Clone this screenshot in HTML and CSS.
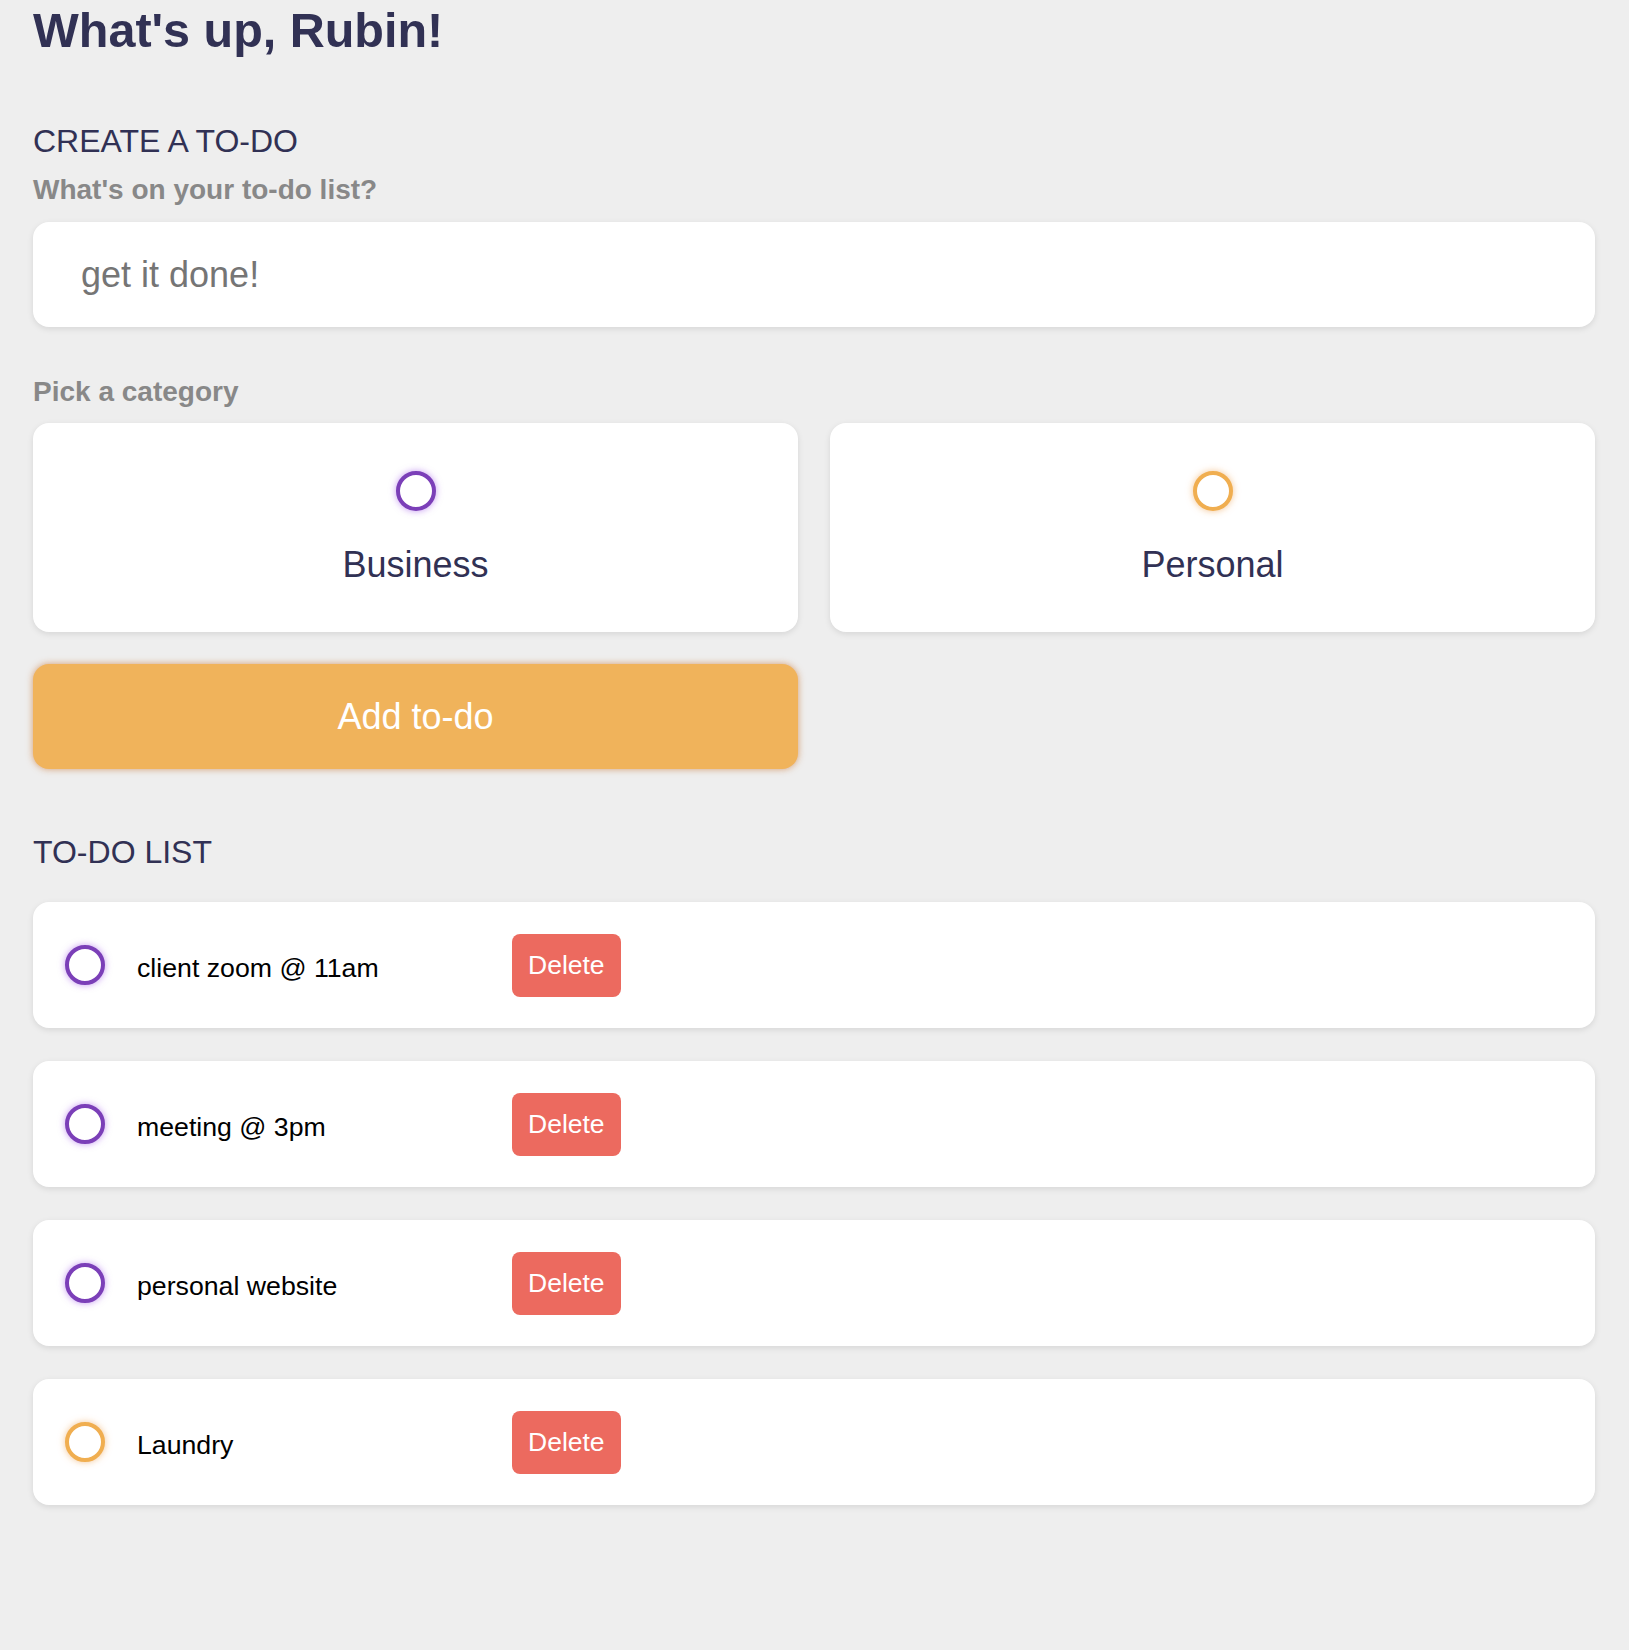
FILE: index.html
```html
<!DOCTYPE html>
<html lang="en">
<head>
<meta charset="utf-8">
<title>To-do</title>
<link rel="stylesheet" href="styles.css">
</head>
<body>
<main class="app">
  <section class="greeting">
    <h1 class="title">What's up, Rubin!</h1>
  </section>

  <section class="create-todo">
    <h2 class="section-title">CREATE A TO-DO</h2>
    <h3 class="field-label">What's on your to-do list?</h3>
    <input class="text-input" type="text" placeholder="get it done!">

    <h3 class="field-label category-label">Pick a category</h3>
    <div class="category-grid">
      <label class="category">
        <span class="bubble business"></span>
        <span class="category-name">Business</span>
      </label>
      <label class="category">
        <span class="bubble personal"></span>
        <span class="category-name">Personal</span>
      </label>
    </div>

    <div class="submit-grid">
      <button class="add-btn" type="button">Add to-do</button>
    </div>
  </section>

  <section class="todo-section">
    <h2 class="section-title list-title">TO-DO LIST</h2>
    <div class="todo-list">
      <div class="todo-item">
        <span class="bubble business"></span>
        <div class="todo-text">client zoom @ 11am</div>
        <button class="delete-btn" type="button">Delete</button>
      </div>
      <div class="todo-item">
        <span class="bubble business"></span>
        <div class="todo-text">meeting @ 3pm</div>
        <button class="delete-btn" type="button">Delete</button>
      </div>
      <div class="todo-item">
        <span class="bubble business"></span>
        <div class="todo-text">personal website</div>
        <button class="delete-btn" type="button">Delete</button>
      </div>
      <div class="todo-item">
        <span class="bubble personal"></span>
        <div class="todo-text">Laundry</div>
        <button class="delete-btn" type="button">Delete</button>
      </div>
    </div>
  </section>
</main>
</body>
</html>
```
FILE: styles.css
```css
* {
  box-sizing: border-box;
  margin: 0;
  padding: 0;
}

html, body {
  background: #eeeeee;
}

body {
  font-family: "Liberation Sans", Arial, Helvetica, sans-serif;
  color: #313154;
}

.app {
  padding: 2px 34px 60px 33px;
}

.title {
  font-size: 48.5px;
  line-height: 56px;
  font-weight: 700;
  color: #313154;
}

.section-title {
  font-size: 32px;
  line-height: 38px;
  font-weight: 400;
  color: #313154;
  margin-top: 64px;
}

.field-label {
  font-size: 28px;
  line-height: 32px;
  font-weight: 700;
  color: #888888;
  margin-top: 14px;
}

.category-label {
  margin-top: 49px;
}

.text-input {
  display: block;
  width: 100%;
  height: 105px;
  margin-top: 16px;
  padding: 0 48px;
  border: none;
  outline: none;
  border-radius: 16px;
  background: #ffffff;
  box-shadow: 0 2px 6px rgba(0, 0, 0, 0.1);
  font-family: "Liberation Sans", Arial, Helvetica, sans-serif;
  font-size: 36px;
  color: #313154;
}

.text-input::placeholder {
  color: #757575;
}

.category-grid {
  display: grid;
  grid-template-columns: 1fr 1fr;
  gap: 32px;
  margin-top: 15px;
}

.category {
  display: flex;
  flex-direction: column;
  align-items: center;
  height: 209px;
  padding-top: 48px;
  background: #ffffff;
  border-radius: 16px;
  box-shadow: 0 2px 6px rgba(0, 0, 0, 0.1);
}

.bubble {
  display: block;
  flex: 0 0 auto;
  width: 40px;
  height: 40px;
  border-radius: 50%;
  background: #ffffff;
}

.bubble.business {
  border: 4px solid #7b3fb8;
  box-shadow: 0 0 7px rgba(150, 70, 230, 0.55);
}

.bubble.personal {
  border: 4px solid #f0ae50;
  box-shadow: 0 0 7px rgba(235, 150, 60, 0.55);
}

.category-name {
  margin-top: 33px;
  font-size: 36px;
  line-height: 42px;
  color: #313154;
}

.submit-grid {
  display: grid;
  grid-template-columns: 1fr 1fr;
  gap: 32px;
  margin-top: 32px;
}

.add-btn {
  height: 105px;
  border: none;
  border-radius: 16px;
  background: #f0b35b;
  color: #ffffff;
  font-family: "Liberation Sans", Arial, Helvetica, sans-serif;
  font-size: 36px;
  box-shadow: 0 0 7px rgba(205, 130, 70, 0.75);
}

.list-title {
  margin-top: 64px;
}

.todo-list {
  display: flex;
  flex-direction: column;
  gap: 33px;
  margin-top: 31px;
}

.todo-item {
  display: flex;
  align-items: center;
  gap: 32px;
  height: 126px;
  padding-left: 32px;
  background: #ffffff;
  border-radius: 16px;
  box-shadow: 0 2px 6px rgba(0, 0, 0, 0.1);
}

.todo-text {
  width: 343px;
  padding-top: 5px;
  font-size: 26.7px;
  line-height: 30px;
  color: #000000;
}

.delete-btn {
  height: 63px;
  padding: 0 16px;
  border: none;
  border-radius: 8px;
  background: #ec6a5f;
  color: #ffffff;
  font-family: "Liberation Sans", Arial, Helvetica, sans-serif;
  font-size: 26.5px;
}
```
